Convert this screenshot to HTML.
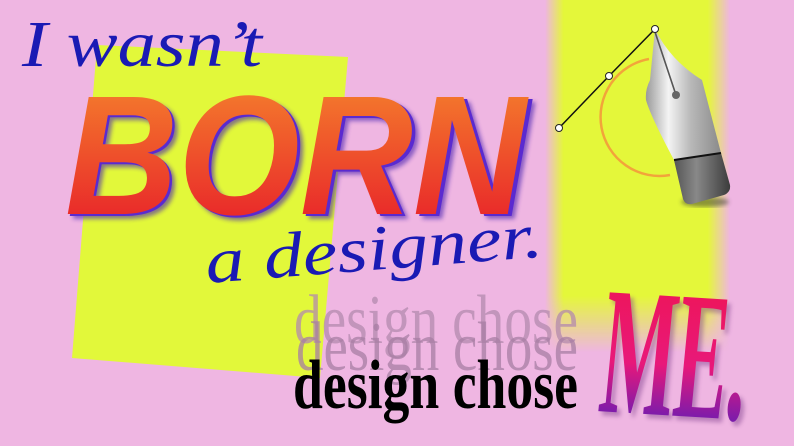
<!DOCTYPE html>
<html><head><meta charset="utf-8"><style>
html,body{margin:0;padding:0;width:794px;height:446px;overflow:hidden;background:#efb6e2}
svg{display:block}
</style></head><body>
<svg width="794" height="446" viewBox="0 0 794 446" xmlns="http://www.w3.org/2000/svg">
<defs>
<linearGradient id="bandH" x1="0" y1="0" x2="1" y2="0">
<stop offset="0" stop-color="#e4f73a" stop-opacity="0"/>
<stop offset="0.1" stop-color="#e4f73a" stop-opacity="1"/>
<stop offset="0.88" stop-color="#e4f73a" stop-opacity="1"/>
<stop offset="1" stop-color="#e4f73a" stop-opacity="0"/>
</linearGradient>
<linearGradient id="bandV" x1="0" y1="0" x2="0" y2="1">
<stop offset="0" stop-color="#fff"/>
<stop offset="0.74" stop-color="#fff"/>
<stop offset="0.88" stop-color="#000"/>
</linearGradient>
<mask id="bm"><rect x="0" y="0" width="794" height="400" fill="url(#bandV)"/></mask>
<linearGradient id="born" x1="0" y1="0" x2="0" y2="1">
<stop offset="0" stop-color="#f68a2c"/>
<stop offset="1" stop-color="#e6152a"/>
</linearGradient>
<linearGradient id="me" x1="0" y1="0" x2="0" y2="1">
<stop offset="0" stop-color="#f0154c"/>
<stop offset="0.55" stop-color="#e8187a"/>
<stop offset="1" stop-color="#2a1ed0"/>
</linearGradient>
<linearGradient id="nib" x1="0" y1="0" x2="1" y2="0">
<stop offset="0" stop-color="#9a9a9a"/>
<stop offset="0.3" stop-color="#f4f4f4"/>
<stop offset="0.6" stop-color="#b8b8b8"/>
<stop offset="1" stop-color="#8a8a8a"/>
</linearGradient>
<linearGradient id="cap" x1="0" y1="0" x2="1" y2="0">
<stop offset="0" stop-color="#555"/>
<stop offset="0.4" stop-color="#888"/>
<stop offset="1" stop-color="#3c3c3c"/>
</linearGradient>
<filter id="blur2"><feGaussianBlur stdDeviation="2"/></filter>
</defs>
<rect width="794" height="446" fill="#efb6e2"/>
<rect x="545" y="0" width="185" height="400" fill="url(#bandH)" mask="url(#bm)"/>
<polygon points="97,45 348,57 320,378 72,358" fill="#e2f83a"/>

<text x="22" y="66" font-family="Liberation Serif, serif" font-style="italic" font-size="66" fill="#1a1ab4" textLength="240" lengthAdjust="spacingAndGlyphs">I wasn’t</text>

<g font-family="Liberation Sans, sans-serif" font-weight="bold" font-style="italic" font-size="170">
<text x="70" y="219" fill="#4a22b0" textLength="463" lengthAdjust="spacingAndGlyphs" filter="url(#blur2)" opacity="0.6">BORN</text>
<text x="67" y="216" fill="#5a2ad0" textLength="463" lengthAdjust="spacingAndGlyphs">BORN</text>
<text x="65" y="214" fill="url(#born)" textLength="461" lengthAdjust="spacingAndGlyphs">BORN</text>
</g>

<text transform="translate(207,283) rotate(-4.5)" font-family="Liberation Serif, serif" font-style="italic" font-size="64" fill="#1a1ab4" textLength="338" lengthAdjust="spacingAndGlyphs">a designer.</text>

<g font-family="Liberation Serif, serif" font-size="70">
<text x="294" y="343" fill="#b48aae" opacity="0.75" textLength="284" lengthAdjust="spacingAndGlyphs">design chose</text>
<text x="296" y="370" fill="#a87ea4" opacity="0.75" textLength="282" lengthAdjust="spacingAndGlyphs">design chose</text>
<text x="293" y="408" fill="#000" font-weight="bold" textLength="285" lengthAdjust="spacingAndGlyphs">design chose</text>
</g>

<g transform="translate(597,411) rotate(3.5) skewX(-2)" font-family="Liberation Serif, serif" font-weight="bold" font-size="182">
<text x="4" y="4" fill="#7a3a8a" opacity="0.45" filter="url(#blur2)" textLength="146" lengthAdjust="spacingAndGlyphs">ME.</text>
<text x="0" y="0" fill="url(#me)" textLength="146" lengthAdjust="spacingAndGlyphs">ME.</text>
</g>

<!-- pen -->
<path d="M649,59 A57,57 0 1 0 670,175" fill="none" stroke="#f2a43a" stroke-width="2.5"/>
<ellipse cx="705" cy="202" rx="24" ry="5" fill="#333" opacity="0.5" filter="url(#blur2)"/>
<path d="M674,160 L721,153 L730,185 Q731,192 724,195 L692,204 Q685,205 683,199 Z" fill="url(#cap)"/>
<path d="M655,29 Q670,60 702,80 L721,153 L674,160 Q650,115 646,100 Q645,90 650,80 Z" fill="url(#nib)"/>
<path d="M674,160 L721,153" stroke="#111" stroke-width="2"/>
<path d="M655,32 L676,95" stroke="#555" stroke-width="1.6"/>
<circle cx="676" cy="95" r="4" fill="#666"/>
<path d="M559,128 L609,76 L655,29" fill="none" stroke="#111" stroke-width="1.5"/>
<circle cx="559" cy="128" r="3.5" fill="#fff" stroke="#222" stroke-width="1"/>
<circle cx="609" cy="76" r="3.5" fill="#fff" stroke="#222" stroke-width="1"/>
<circle cx="655" cy="29" r="3.5" fill="#fff" stroke="#222" stroke-width="1"/>
</svg>
</body></html>
